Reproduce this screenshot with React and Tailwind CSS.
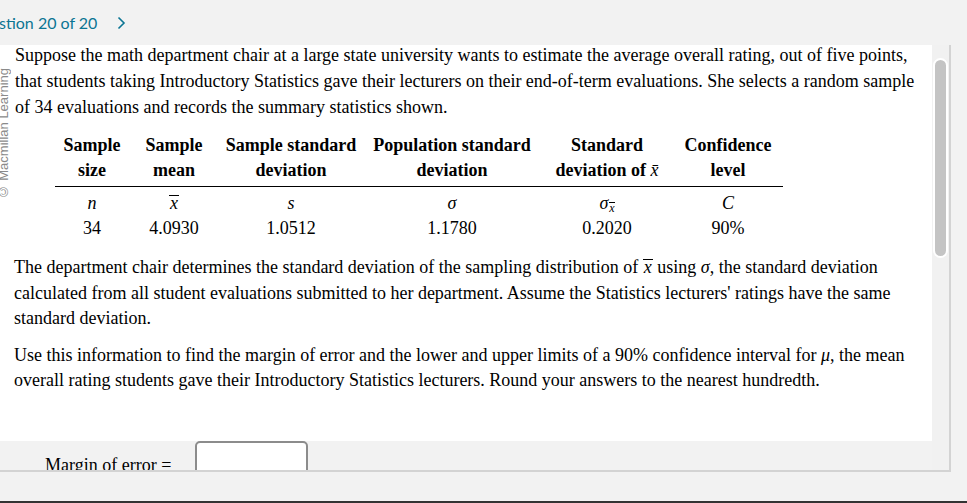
import React from "react";

const serif = { fontFamily: '"Liberation Serif", "Times New Roman", serif' };

const Xbar = () => (
  <span className="italic inline-block border-t border-black leading-[15px] px-[1px]">x</span>
);

const cols = [
  { w: "w-[74px]", head: ["Sample", "size"], sym: <span className="italic">n</span>, val: "34" },
  { w: "w-[90px]", head: ["Sample", "mean"], sym: <Xbar />, val: "4.0930" },
  { w: "w-[144px]", head: ["Sample standard", "deviation"], sym: <span className="italic">s</span>, val: "1.0512" },
  { w: "w-[178px]", head: ["Population standard", "deviation"], sym: <span className="italic">σ</span>, val: "1.1780" },
  {
    w: "w-[132px]",
    head: ["Standard", <>deviation of <span className="italic font-normal">x̄</span></>],
    sym: (
      <span>
        <span className="italic">σ</span>
        <sub className="text-[12px] italic inline-block border-t border-black leading-[11px] ml-[1px]">x</sub>
      </span>
    ),
    val: "0.2020",
  },
  { w: "w-[110px]", head: ["Confidence", "level"], sym: <span className="italic">C</span>, val: "90%" },
];

function StatsTable() {
  return (
    <div className="ml-[55px] mt-[13px] w-[728px]">
      <div className="flex border-b-[1.5px] border-black pb-[3px]">
        {cols.map((c, i) => (
          <div key={i} className={`${c.w} text-center font-bold leading-[25px]`}>
            <div>{c.head[0]}</div>
            <div>{c.head[1]}</div>
          </div>
        ))}
      </div>
      <div className="flex pt-[4px] leading-[25px]">
        {cols.map((c, i) => (
          <div key={i} className={`${c.w} text-center`}>{c.sym}</div>
        ))}
      </div>
      <div className="flex leading-[25px]">
        {cols.map((c, i) => (
          <div key={i} className={`${c.w} text-center`}>{c.val}</div>
        ))}
      </div>
    </div>
  );
}

export default function App() {
  return (
    <div className="w-[967px] h-[503px] bg-[#f2f2f2] overflow-hidden flex flex-col border-b-2 border-[#333]">
      {/* top bar */}
      <div className="h-[45px] flex items-center shrink-0" style={{ fontFamily: 'Lato, "Open Sans", sans-serif' }}>
        <span className="text-[16px] text-[#0b7593] -ml-[1px]">stion 20 of 20</span>
        <svg className="ml-[20px]" width="9" height="14" viewBox="0 0 9 14" fill="none">
          <path d="M1.5 1.5 L7 7 L1.5 12.5" stroke="#0b7593" strokeWidth="1.6" />
        </svg>
      </div>

      {/* question panel */}
      <div className="w-[951px] h-[427px] flex border-r-2 border-b-2 border-[#d3d3d3] shrink-0">
        <div className="w-[933px] flex flex-col">
          <div className="relative h-[396px] bg-white overflow-hidden text-[18px] text-black" style={serif}>
            <div
              className="absolute left-[-3px] top-[23px] rotate-180 text-[13px] leading-[14px] text-[#8a8a8a] whitespace-nowrap [writing-mode:vertical-rl]"
              style={{ fontFamily: '"Liberation Sans", Arial, sans-serif' }}
            >
              © Macmillan Learning
            </div>
            <p className="pl-[15px] pr-[14px] -mt-[3px] leading-[26px]">
              Suppose the math department chair at a large state university wants to estimate the average overall rating, out of five points, that students taking Introductory Statistics gave their lecturers on their end-of-term evaluations. She selects a random sample of 34 evaluations and records the summary statistics shown.
            </p>
            <StatsTable />
            <p className="pl-[14px] pr-[14px] mt-[14px] leading-[25.5px]">
              The department chair determines the standard deviation of the sampling distribution of <Xbar /> using <span className="italic">σ</span>, the standard deviation calculated from all student evaluations submitted to her department. Assume the Statistics lecturers' ratings have the same standard deviation.
            </p>
            <p className="pl-[14px] pr-[14px] mt-[11px] leading-[25.5px]">
              Use this information to find the margin of error and the lower and upper limits of a 90% confidence interval for <span className="italic">μ</span>, the mean overall rating students gave their Introductory Statistics lecturers. Round your answers to the nearest hundredth.
            </p>
          </div>
          <div className="h-[29px] flex items-start overflow-hidden text-[18px]" style={serif}>
            <span className="ml-[45px] mt-[13px] leading-[22px]">Margin of error =</span>
            <div className="ml-[24px] w-[113px] h-[36px] bg-white border-2 border-[#8c8c8c] rounded-[5px]" />
          </div>
        </div>
        <div className="w-[17px] bg-[#f1f1f1] pt-[13px] flex justify-center">
          <div className="w-[15px] h-[200px] rounded-full bg-[#c4c4c4] border-2 border-white" />
        </div>
      </div>
    </div>
  );
}
